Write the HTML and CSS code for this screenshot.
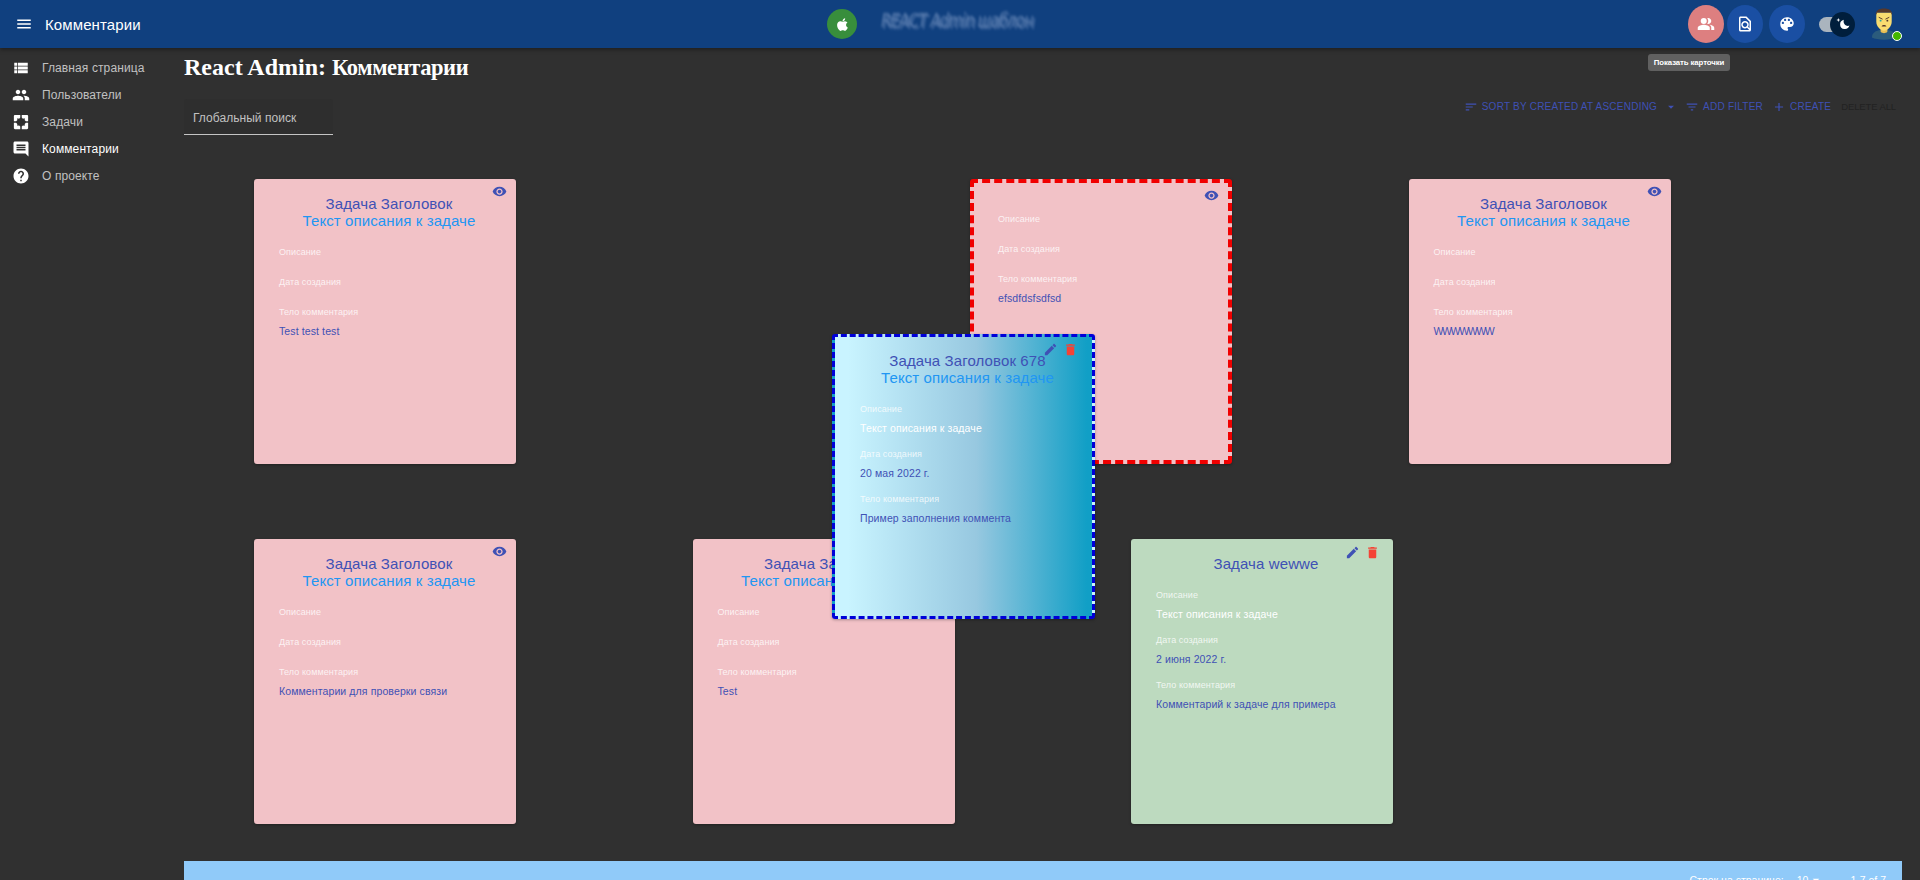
FILE: index.html
```
<!DOCTYPE html>
<html lang="ru">
<head>
<meta charset="utf-8">
<title>Комментарии</title>
<link rel="stylesheet" href="styles.css">
</head>
<body>
<svg class="defs" aria-hidden="true">
  <symbol id="eye" viewBox="0 0 24 24"><path d="M12 4.5C7 4.5 2.73 7.61 1 12c1.73 4.39 6 7.500 11 7.500s9.270-3.110 11-7.500c-1.730-4.390-6-7.500-11-7.500zM12 17c-2.760 0-5-2.240-5-5s2.240-5 5-5 5 2.240 5 5-2.240 5-5 5zm0-8c-1.660 0-3 1.340-3 3s1.340 3 3 3 3-1.340 3-3-1.340-3-3-3z"/></symbol>
  <symbol id="edit" viewBox="0 0 24 24"><path d="M3 17.250V21h3.750L17.810 9.940l-3.750-3.750L3 17.250zM20.710 7.040c.39-.39.39-1.020 0-1.410l-2.340-2.340c-.39-.39-1.020-.39-1.410 0l-1.830 1.830 3.750 3.750 1.830-1.830z"/></symbol>
  <symbol id="trash" viewBox="0 0 24 24"><path d="M6 19c0 1.100.9 2 2 2h8c1.100 0 2-.9 2-2V7H6v12zM19 4h-3.500l-1-1h-5l-1 1H5v2h14V4z"/></symbol>
  <symbol id="people" viewBox="0 0 24 24"><path d="M16 11c1.660 0 2.990-1.340 2.990-3S17.660 5 16 5c-1.660 0-3 1.340-3 3s1.340 3 3 3zm-8 0c1.660 0 2.990-1.340 2.990-3S9.660 5 8 5C6.340 5 5 6.340 5 8s1.340 3 3 3zm0 2c-2.330 0-7 1.170-7 3.500V19h14v-2.500c0-2.330-4.670-3.500-7-3.500zm8 0c-.29 0-.62.020-.97.050 1.160.84 1.970 1.970 1.970 3.450V19h6v-2.500c0-2.330-4.670-3.500-7-3.500z"/></symbol>
</svg>

<header class="appbar">
  <svg class="menu" viewBox="0 0 24 24"><path d="M3 18h18v-2H3v2zm0-5h18v-2H3v2zm0-7v2h18V6H3z"/></svg>
  <span class="appbar-title">Комментарии</span>
  <div class="brand">
    <span class="brand-logo"><svg viewBox="0 0 24 24"><path d="M17.050 20.280c-.98.95-2.050.8-3.080.35-1.090-.46-2.090-.48-3.240 0-1.440.62-2.200.44-3.060-.35C2.790 15.250 3.510 7.590 9.050 7.310c1.350.07 2.290.74 3.080.8 1.180-.24 2.310-.93 3.570-.84 1.510.12 2.650.72 3.400 1.800-3.120 1.870-2.380 5.980.48 7.130-.57 1.500-1.310 2.990-2.540 4.090zM12.030 7.250c-.15-2.230 1.660-4.070 3.740-4.250.29 2.580-2.340 4.500-3.740 4.250z"/></svg></span>
    <span class="brand-text">REACT Admin шаблон</span>
  </div>
  <div class="tools">
    <button class="round round-active"><svg viewBox="0 0 24 24"><path d="M16.670 13.130C18.040 14.060 19 15.320 19 17v3h4v-3c0-2.180-3.570-3.470-6.330-3.870zM15 12c2.210 0 4-1.790 4-4s-1.790-4-4-4c-.47 0-.91.1-1.330.24C14.500 5.270 15 6.580 15 8s-.5 2.730-1.330 3.760c.42.14.86.24 1.330.24z"/><circle cx="9" cy="8" r="4"/><path d="M9 13c-2.670 0-8 1.340-8 4v3h16v-3c0-2.660-5.330-4-8-4z"/></svg><span class="tooltip">Показать карточки</span></button>
    <button class="round"><svg viewBox="0 0 24 24"><path d="M14 2H6c-1.100 0-2 .9-2 2v16c0 1.100.89 2 2 2h12c1.100 0 2-.9 2-2V8l-6-6zM6 4h7l5 5v8.580l-1.840-1.840c1.280-1.940 1.070-4.570-.64-6.280C14.550 8.490 13.280 8 12 8s-2.550.49-3.530 1.460c-1.950 1.950-1.950 5.110 0 7.050.97.970 2.250 1.460 3.530 1.460.960 0 1.920-.28 2.750-.83L17.600 20H6V4zm8.110 11.100c-.56.56-1.310.88-2.110.88s-1.550-.31-2.110-.88c-.56-.56-.88-1.310-.88-2.110s.31-1.550.88-2.110c.56-.57 1.310-.88 2.110-.88s1.550.31 2.110.88c.56.560.88 1.310.88 2.110s-.31 1.550-.88 2.110z"/></svg></button>
    <button class="round round-palette"><svg viewBox="0 0 24 24"><path d="M12 3c-4.970 0-9 4.030-9 9s4.030 9 9 9c.83 0 1.500-.67 1.500-1.500 0-.39-.15-.74-.39-1.010-.23-.26-.38-.61-.38-.99 0-.83.67-1.500 1.500-1.500H16c2.760 0 5-2.240 5-5 0-4.420-4.030-8-9-8zm-5.500 9c-.83 0-1.500-.67-1.500-1.500S5.670 9 6.500 9 8 9.670 8 10.500 7.330 12 6.500 12zm3-4C8.670 8 8 7.330 8 6.500S8.670 5 9.500 5s1.500.67 1.500 1.500S10.330 8 9.500 8zm5 0c-.83 0-1.500-.67-1.500-1.500S13.670 5 14.500 5s1.500.67 1.500 1.500S15.330 8 14.500 8zm3 4c-.83 0-1.500-.67-1.500-1.500S16.670 9 17.500 9s1.500.67 1.500 1.500-.67 1.500-1.500 1.500z"/></svg></button>
    <span class="switch"><span class="thumb"><svg viewBox="0 0 20 20"><path d="M4.200 2.500l-.7 1.800-1.800.7 1.800.7.700 1.800.7-1.800L6.700 5l-1.800-.7-.7-1.800z"/><path d="M11 4.700a5.900 5.900 0 1 0 7 7.300c-3.500 1.600-8.500-2-7-7.300z"/></svg></span></span>
    <span class="avatar"><svg viewBox="0 0 27 32">
      <path fill="#2b5b7c" d="M1 30c0-5 4-7 9-8h7c5 1 9 3 9 8-5 3-20 3-25 0z"/>
      <path fill="#e8bf55" d="M10 18h7v6c-2 2-5 2-7 0z"/>
      <path fill="#f9dc70" d="M5.500 4h16v10c0 4-4 9-8 9s-8-5-8-9z"/>
      <path fill="#54372b" d="M5 7C5 2 8 0 13.500 0S22 2 22 7l-1.500-3h-14z"/>
      <path stroke="#54372b" stroke-width="1" d="M8 9l4 2m7-2l-4 2"/>
      <circle cx="10" cy="12.500" r="1" fill="#2ca79c"/><circle cx="17" cy="12.500" r="1" fill="#54372b"/>
      <path fill="#54372b" d="M11 18.500c1-2 4-2 5 0z"/></svg><i class="online"></i></span>
  </div>
</header>

<div class="layout">
  <nav class="sidebar">
    <a class="nav"><svg viewBox="0 0 24 24"><path d="M3 14h4v-4H3v4zm0 5h4v-4H3v4zM3 9h4V5H3v4zm5 5h13v-4H8v4zm0 5h13v-4H8v4zM8 5v4h13V5H8z"/></svg>Главная страница</a>
    <a class="nav"><svg><use href="#people"/></svg>Пользователи</a>
    <a class="nav"><svg viewBox="0 0 24 24"><path d="M4 2.500h7V6L9.500 7.500 7 7v2.500L5.500 11h-3V4c0-.8.700-1.500 1.500-1.500zM20 2.500h-7V6l1.500 1.500L17 7v2.500l1.500 1.500h3V4c0-.8-.7-1.500-1.500-1.500zM4 21.500h7V18l-1.500-1.500L7 17v-2.500L5.500 13h-3v7c0 .8.700 1.500 1.500 1.500zM20 21.500h-7V18l1.500-1.500 2.500.5v-2.500l1.500-1.500h3v7c0 .8-.7 1.500-1.500 1.500z"/></svg>Задачи</a>
    <a class="nav nav-active"><svg viewBox="0 0 24 24"><path d="M21.990 4c0-1.100-.89-2-1.990-2H4c-1.100 0-2 .9-2 2v12c0 1.100.9 2 2 2h14l4 4-.01-18zM18 14H6v-2h12v2zm0-3H6V9h12v2zm0-3H6V6h12v2z"/></svg>Комментарии</a>
    <a class="nav"><svg viewBox="0 0 24 24"><path d="M12 2C6.480 2 2 6.480 2 12s4.480 10 10 10 10-4.480 10-10S17.520 2 12 2zm1 17h-2v-2h2v2zm2.070-7.750l-.9.920C13.450 12.900 13 13.500 13 15h-2v-.5c0-1.100.45-2.100 1.170-2.830l1.240-1.260c.37-.36.59-.86.59-1.410 0-1.100-.9-2-2-2s-2 .9-2 2H8c0-2.210 1.790-4 4-4s4 1.790 4 4c0 .88-.36 1.680-.93 2.250z"/></svg>О проекте</a>
  </nav>

  <main class="content">
    <h1>React Admin: <span class="h1-name">Комментарии</span></h1>
    <div class="toolbar">
      <div class="search">Глобальный поиск</div>
      <div class="actions">
        <span class="act act-sort"><svg viewBox="0 0 24 24"><path d="M3 18h6v-2H3v2zM3 6v2h18V6H3zm0 7h12v-2H3v2z"/></svg>SORT BY CREATED AT ASCENDING<svg class="caret" viewBox="0 0 24 24"><path d="M7 10l5 5 5-5z"/></svg></span>
        <span class="act act-filter"><svg viewBox="0 0 24 24"><path d="M10 18h4v-2h-4v2zM3 6v2h18V6H3zm3 7h12v-2H6v2z"/></svg>ADD FILTER</span>
        <span class="act act-create"><svg viewBox="0 0 24 24"><path d="M19 13h-6v6h-2v-6H5v-2h6V5h2v6h6v2z"/></svg>CREATE</span>
        <span class="act act-delete">DELETE ALL</span>
      </div>
    </div>

    <section class="cards">
      <article class="card">
        <div class="icons"><svg><use href="#eye"/></svg></div>
        <div class="head"><p class="t1">Задача Заголовок</p><p class="t2">Текст описания к задаче</p></div>
        <div class="field"><label>Описание</label></div>
        <div class="field"><label>Дата создания</label></div>
        <div class="field"><label>Тело комментария</label><p>Test test test</p></div>
      </article>
      <article class="card card-over">
        <div class="icons"><svg><use href="#eye"/></svg></div>
        <div class="field"><label>Описание</label></div>
        <div class="field"><label>Дата создания</label></div>
        <div class="field"><label>Тело комментария</label><p>efsdfdsfsdfsd</p></div>
      </article>
      <article class="card">
        <div class="icons"><svg><use href="#eye"/></svg></div>
        <div class="head"><p class="t1">Задача Заголовок</p><p class="t2">Текст описания к задаче</p></div>
        <div class="field"><label>Описание</label></div>
        <div class="field"><label>Дата создания</label></div>
        <div class="field"><label>Тело комментария</label><p class="tight">WWWWWWW</p></div>
      </article>
    </section>
    <section class="cards">
      <article class="card">
        <div class="icons"><svg><use href="#eye"/></svg></div>
        <div class="head"><p class="t1">Задача Заголовок</p><p class="t2">Текст описания к задаче</p></div>
        <div class="field"><label>Описание</label></div>
        <div class="field"><label>Дата создания</label></div>
        <div class="field"><label>Тело комментария</label><p>Комментарии для проверки связи</p></div>
      </article>
      <article class="card">
        <div class="head"><p class="t1">Задача Заголовок</p><p class="t2">Текст описания к задаче</p></div>
        <div class="field"><label>Описание</label></div>
        <div class="field"><label>Дата создания</label></div>
        <div class="field"><label>Тело комментария</label><p>Test</p></div>
      </article>
      <article class="card card-own">
        <div class="icons"><svg><use href="#edit"/></svg><svg class="red"><use href="#trash"/></svg></div>
        <div class="head"><p class="t1">Задача wewwe</p></div>
        <div class="field"><label>Описание</label><p class="white">Текст описания к задаче</p></div>
        <div class="field"><label>Дата создания</label><p>2 июня 2022 г.</p></div>
        <div class="field"><label>Тело комментария</label><p>Комментарий к задаче для примера</p></div>
      </article>
    </section>
    <footer class="pager"><span>Строк на странице:</span><span class="size">10</span><svg viewBox="0 0 24 24"><path d="M7 10l5 5 5-5z"/></svg><span class="range">1-7 of 7</span></footer>
  </main>
</div>

<article class="card card-drag">
  <div class="icons"><svg><use href="#edit"/></svg><svg class="red"><use href="#trash"/></svg></div>
  <div class="head"><p class="t1">Задача Заголовок 678</p><p class="t2">Текст описания к задаче</p></div>
  <div class="field"><label>Описание</label><p class="white">Текст описания к задаче</p></div>
  <div class="field"><label>Дата создания</label><p>20 мая 2022 г.</p></div>
  <div class="field"><label>Тело комментария</label><p>Пример заполнения коммента</p></div>
</article>
</body>
</html>
```
FILE: styles.css
```
* { box-sizing: border-box; }
body { margin: 0; height: 880px; overflow: hidden; background: #303030; color: #fff; font-family: "Liberation Sans", Arial, sans-serif; }
p { margin: 0; }
svg { fill: currentColor; display: block; flex: none; }
.defs { display: none; }

.appbar { position: relative; z-index: 2; height: 48px; display: grid; grid-template-columns: auto 1fr auto auto; align-items: center; background: #10407f; box-shadow: 0 2px 4px rgba(0,0,0,.35); padding: 0 2px 0 15px; }
.menu { width: 18px; height: 18px; margin-right: 12px; }
.appbar-title { font-size: 15px; letter-spacing: .11px; }
.brand { display: flex; align-items: center; width: 861px; }
.brand-logo { width: 30px; height: 30px; border-radius: 50%; background: #388e3c; display: grid; place-items: center; margin-right: 24px; }
.brand-logo svg { width: 17px; height: 17px; }
.brand-text { font: italic 15px "DejaVu Sans", sans-serif; letter-spacing: -.9px; color: #9fb5da; opacity: .5; filter: blur(1.3px); text-shadow: 2px 1px 0 #7f9bc9; transform: scaleY(1.25); margin-top: -7px; white-space: nowrap; }
.tools { display: flex; align-items: center; height: 48px; }
.round { position: relative; width: 36px; height: 38px; padding: 0; border: 0; border-radius: 50%; background: #1a4fa3; color: #fff; display: grid; place-items: center; margin-right: 6px; }
.round svg { width: 18px; height: 18px; }
.round-active { background: #dd7f80; margin-right: 3px; }
.round-palette { margin-right: 14px; }
.tooltip { position: absolute; top: 49px; left: -40px; width: 82px; height: 17px; border-radius: 3px; background: #606060; font: bold 7.8px/17px "Liberation Sans", Arial, sans-serif; letter-spacing: -.1px; text-align: center; white-space: nowrap; }
.switch { position: relative; width: 32px; height: 15px; border-radius: 8px; background: #aab4be; margin-right: 20px; }
.thumb { position: absolute; left: 11px; top: -5px; width: 25px; height: 25px; border-radius: 50%; background: #001e3c; display: grid; place-items: center; }
.thumb svg { width: 16px; height: 16px; }
.avatar { position: relative; width: 47px; height: 32px; }
.avatar > svg { width: 26px; height: 32px; }
.online { position: absolute; left: 21px; top: 23px; width: 10px; height: 10px; border-radius: 50%; background: #44b700; border: 1px solid #fff; }

.layout { display: flex; }
.sidebar { width: 184px; padding-top: 6px; }
.nav { height: 27px; display: flex; align-items: center; gap: 12px; padding-left: 12px; font-size: 12px; letter-spacing: .11px; color: #c1c1c1; }
.nav svg { width: 18px; height: 18px; color: #fff; }
.nav-active { color: #fff; }
.content { width: 1718px; }
h1 { margin: 6px 0 0; font: bold 24px/27px "Liberation Serif", "Times New Roman", serif; letter-spacing: 0; }
.h1-name { font-size: 22.500px; letter-spacing: -.4px; }

.toolbar { display: flex; justify-content: space-between; align-items: flex-start; height: 98px; padding-top: 18px; }
.search { width: 149px; height: 36px; padding: 12px 9px 0; background: #2e2e2e; border-bottom: 1px solid #c4c4c4; border-radius: 3px 3px 0 0; font-size: 12px; line-height: 14px; letter-spacing: .05px; color: #c1c1c1; }
.actions { display: flex; padding-top: 1px; font-size: 10px; line-height: 14px; color: #3f51b5; white-space: nowrap; }
.act { display: flex; align-items: center; letter-spacing: .23px; }
.act svg { width: 14px; height: 14px; margin-right: 4px; }
.act .caret { margin: 0 7px; }
.act-filter { margin-right: 9px; }
.act-create { margin-right: 10px; }
.act-delete { color: #222; margin-right: 6px; font-size: 9.500px; letter-spacing: -.12px; }

.cards { display: flex; padding-left: 70px; gap: 176.500px; height: 360px; }
.cards + .cards { height: 322px; }
.card { position: relative; flex: none; width: 262px; height: 285px; padding: 16px 25px 0; border-radius: 3px; background: #f2c2c7; color: #3f51b5; box-shadow: 0 1px 3px rgba(0,0,0,.3); }
.icons { position: absolute; top: 5px; right: 9px; display: flex; gap: 5px; }
.icons svg { width: 15px; height: 15px; }
.red { color: #f44336; }
.head { margin: 0 -4px 17px 4px; text-align: center; font-size: 15px; line-height: 17px; letter-spacing: .11px; white-space: nowrap; }
.t2 { color: #2196f3; }
.field { padding-bottom: 10px; }
.field label { display: block; height: 20px; font-size: 9px; line-height: 13px; letter-spacing: .08px; color: rgba(255,255,255,.8); }
.field p { font-size: 10.500px; line-height: 15px; margin-top: -2px; margin-bottom: 2px; letter-spacing: .11px; }
.field .white { color: #fff; }
.field .tight { letter-spacing: -1.350px; }
.card-over { margin-left: 277.500px; border: 4px dashed #f00000; padding: 30px 24px 0; }
.card-own { background: #bddabf; }
.card-own .icons { right: 13px; top: 6px; }
.card-drag { position: absolute; left: 832px; top: 334px; width: 263px; border: 3px dashed #0000d8; padding: 15px 25px 0; background: linear-gradient(90deg, #c9f4ff 5%, #97c8e0 55%, #119fc6 98%); }
.card-drag .icons { right: 14px; }
.pager { height: 38px; display: flex; align-items: center; justify-content: flex-end; background: #90caf9; font-size: 10.500px; padding-right: 16px; }
.pager .size { margin-left: 13px; }
.pager svg { width: 16px; height: 16px; }
.range { margin-left: 26px; }
```
